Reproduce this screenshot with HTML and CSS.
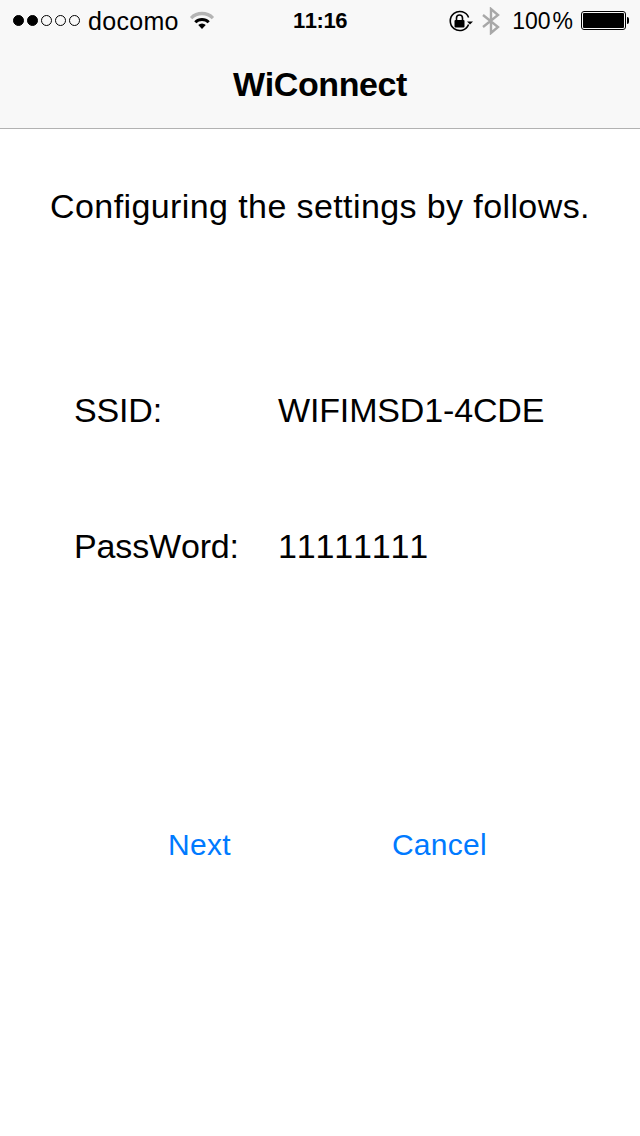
FILE: index.html
```html
<!DOCTYPE html>
<html lang="en">
<head>
    <meta charset="UTF-8">
    <meta name="viewport" content="width=device-width, initial-scale=1.0">
    <title>WiConnect</title>
    <link rel="stylesheet" href="styles.css">
</head>
<body>
    <!-- Status bar and nav bar -->
    <header class="top-bar">
        <div class="status-bar">
            <div class="status-left">
                <span class="signal">
                    <i class="dot on"></i><i class="dot on"></i><i class="dot"></i><i class="dot"></i><i class="dot"></i>
                </span>
                <span class="carrier">docomo</span>
                <svg class="wifi" width="28" height="21" viewBox="0 0 26 20">
                    <path d="M1.5 7.5 A16 16 0 0 1 24.5 7.5 L22.3 9.8 A13 13 0 0 0 3.7 9.8 Z" fill="#b4b4b4"/>
                    <path d="M5.6 11.6 A10.5 10.5 0 0 1 20.4 11.6 L18.4 13.6 A7.6 7.6 0 0 0 7.6 13.6 Z" fill="#000"/>
                    <path d="M9.4 15.2 A5.2 5.2 0 0 1 16.6 15.2 L13 19 Z" fill="#000"/>
                </svg>
            </div>
            <div class="status-time">11:16</div>
            <div class="status-right">
                <svg class="lock" width="26" height="24" viewBox="0 0 26 24">
                    <path d="M20.6 15.5 A9.5 9.5 0 1 1 20.6 8.5" fill="none" stroke="#000" stroke-width="1.6"/>
                    <path d="M19 12.5 L25 12.5 L22 15.5 Z" fill="#000"/>
                    <rect x="6.5" y="11" width="10" height="7.5" rx="1" fill="#000"/>
                    <path d="M8.5 11 V9 A3 3 0 0 1 14.5 9 V11" fill="none" stroke="#000" stroke-width="1.6"/>
                </svg>
                <svg class="bluetooth" width="18" height="28" viewBox="0 0 18 28">
                    <path d="M1 8 L16 20 L9 26 V2 L16 8 L1 20" fill="none" stroke="#a8a8a8" stroke-width="2.4"/>
                </svg>
                <span class="percent">100<span class="percent-sign">%</span></span>
                <span class="battery"><span class="battery-fill"></span></span>
                <span class="battery-tip"></span>
            </div>
        </div>
        <div class="nav-bar">
            <h1>WiConnect</h1>
        </div>
    </header>
    <main class="content">
        <p class="intro">Configuring the settings by follows.</p>
        <div class="settings">
            <div class="setting-row">
                <span class="setting-label">SSID:</span>
                <span class="setting-value">WIFIMSD1-4CDE</span>
            </div>
            <div class="setting-row">
                <span class="setting-label">PassWord:</span>
                <span class="setting-value">11111111</span>
            </div>
        </div>
        <div class="actions">
            <a class="action action-next">Next</a>
            <a class="action action-cancel">Cancel</a>
        </div>
    </main>
</body>
</html>
```

FILE: styles.css
```css
/* Global Styling */
body {
    margin: 0;
    background-color: #ffffff;
    color: #000000;
    font-family: "Liberation Sans", Arial, sans-serif;
    font-kerning: none;
}
/* Status bar + nav */
.top-bar {
    background-color: #f8f8f8;
    border-bottom: 1px solid #b2b2b2;
    height: 128px;
}
.status-bar {
    display: grid;
    grid-template-columns: 1fr auto 1fr;
    align-items: center;
    height: 41px;
    font-size: 24px;
}
.status-left {
    display: flex;
    align-items: center;
    padding-left: 13px;
}
.signal {
    display: flex;
    gap: 3px;
}
.dot {
    width: 11px;
    height: 11px;
    box-sizing: border-box;
    border: 1px solid #000;
    border-radius: 50%;
}
.dot.on {
    background-color: #000;
}
.carrier {
    margin-left: 8px;
    padding-top: 2px;
    font-size: 25px;
    letter-spacing: 0.3px;
}
.wifi {
    margin-left: 9px;
    margin-bottom: 2px;
}
.status-time {
    padding-top: 1px;
    font-size: 22px;
    font-weight: 700;
    letter-spacing: -0.5px;
}
.status-right {
    display: flex;
    align-items: center;
    justify-content: flex-end;
    padding-right: 11px;
}
.bluetooth {
    margin-left: 8px;
}
.percent {
    margin-left: 12px;
    padding-top: 2px;
    font-size: 23px;
}
.percent-sign {
    margin-left: 2px;
}
.battery {
    display: block;
    margin-left: 8px;
    width: 45px;
    height: 19px;
    box-sizing: border-box;
    border: 1px solid #000;
    border-radius: 3px;
    padding: 1px;
}
.battery-fill {
    display: block;
    height: 100%;
    background-color: #000;
    border-radius: 1px;
}
.battery-tip {
    display: block;
    width: 2px;
    height: 7px;
    margin-left: 1px;
    background-color: #000;
    border-radius: 0 2px 2px 0;
}
.nav-bar {
    display: flex;
    justify-content: center;
    align-items: center;
    height: 87px;
}
.nav-bar h1 {
    margin: 0;
    font-size: 34px;
    font-weight: 700;
    letter-spacing: -0.4px;
}
/* Main content */
.content {
    display: flex;
    flex-direction: column;
}
.intro {
    margin: 57px 0 0;
    text-align: center;
    font-size: 34px;
    line-height: 40px;
    letter-spacing: 0.4px;
}
.settings {
    display: flex;
    flex-direction: column;
    gap: 96px;
    margin-top: 164px;
    padding-left: 74px;
}
.setting-row {
    display: flex;
    font-size: 34px;
    line-height: 40px;
    letter-spacing: -0.15px;
}
.setting-label {
    width: 204px;
}
/* Buttons */
.actions {
    display: flex;
    margin-top: 261px;
    font-size: 30px;
    line-height: 36px;
    letter-spacing: 0.3px;
    color: #007aff;
}
.action-next {
    margin-left: 168px;
}
.action-cancel {
    margin-left: 161px;
}
```
